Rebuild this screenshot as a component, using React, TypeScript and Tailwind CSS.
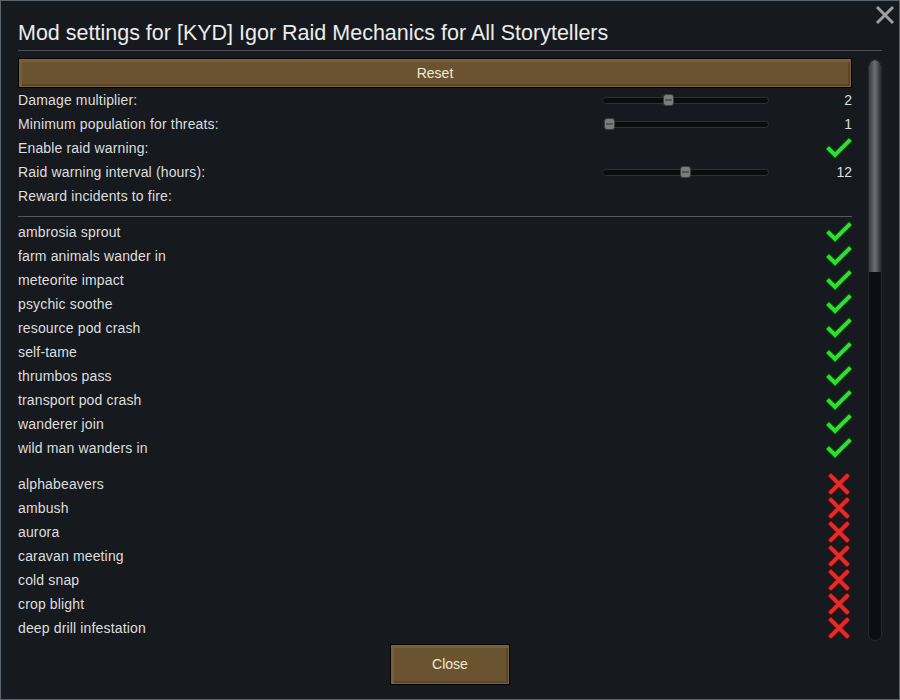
const good = [
  'ambrosia sprout',
  'farm animals wander in',
  'meteorite impact',
  'psychic soothe',
  'resource pod crash',
  'self-tame',
  'thrumbos pass',
  'transport pod crash',
  'wanderer join',
  'wild man wanders in',
];

const bad = ['alphabeavers', 'ambush', 'aurora', 'caravan meeting', 'cold snap', 'crop blight', 'deep drill infestation'];

const Check = () => (
  <svg width="26" height="22" viewBox="0 0 26 22">
    <polyline points="3,12 9,18 23,4" fill="none" stroke="#0f3a10" strokeWidth="6.5" strokeLinecap="square" strokeLinejoin="miter" />
    <polyline points="3,12 9,18 23,4" fill="none" stroke="#2ee02e" strokeWidth="4" strokeLinecap="square" strokeLinejoin="miter" />
  </svg>
);

const Cross = () => (
  <svg width="24" height="22" viewBox="0 0 24 22">
    <path d="M4 3 L20 19 M20 3 L4 19" fill="none" stroke="#4a0c0c" strokeWidth="6" strokeLinecap="square" />
    <path d="M4 3 L20 19 M20 3 L4 19" fill="none" stroke="#e52a2a" strokeWidth="4" strokeLinecap="square" />
  </svg>
);

const Slider = ({ thumb }: { thumb: string }) => (
  <div className="relative w-[167px] h-[12px] flex items-center">
    <div className="w-full h-[7px] rounded-full bg-[#0a0c0e] border border-[#2b3036]" />
    <div className={`absolute top-0 ${thumb} w-[11px] h-[12px] rounded-[3px] bg-[#7a7c7e] border border-[#3a3c3e] flex items-center justify-center`}>
      <div className="w-[7px] h-[2px] bg-[#55575a]" />
    </div>
  </div>
);

const Row = ({ label, children }: { label: string; children?: React.ReactNode }) => (
  <div className="h-6 flex items-center">
    <span className="flex-1 pt-[1px] tracking-[0.15px]">{label}</span>
    {children}
  </div>
);

const Button = ({ label, className }: { label: string; className: string }) => (
  <div
    className={`${className} border border-black bg-[#6a5330] shadow-[inset_0_0_0_1px_#7d6238,inset_3px_3px_0_#7a5f36,inset_-3px_-3px_0_#5a4527] flex items-center justify-center text-[#f3ead0] text-[14px]`}
  >
    {label}
  </div>
);

export default function App() {
  return (
    <div
      className="relative w-[900px] h-[700px] bg-[#161a1e] border border-[#5a626b] text-[#dedede] text-[14px] overflow-hidden flex flex-col"
      style={{ fontFamily: '"Liberation Sans", Arial, sans-serif' }}
    >
      <svg className="absolute top-[3px] right-[3px]" width="22" height="22" viewBox="0 0 22 22">
        <path d="M3 3 L19 19 M19 3 L3 19" stroke="#9ea1a4" strokeWidth="3" />
      </svg>

      <div className="mx-[17px] pt-[20px] pb-[5px] border-b border-[#4b5055]">
        <div className="text-[21.5px] leading-[24px] text-[#ececec]">Mod settings for [KYD] Igor Raid Mechanics for All Storytellers</div>
      </div>

      <div className="flex ml-[17px] mt-[7px] h-[583px]">
        <div className="w-[834px] overflow-hidden">
          <Button label="Reset" className="h-[30px] w-full" />
          <Row label="Damage multiplier:">
            <Slider thumb="left-[61px]" />
            <span className="w-[83px] text-right">2</span>
          </Row>
          <Row label="Minimum population for threats:">
            <Slider thumb="left-[2px]" />
            <span className="w-[83px] text-right">1</span>
          </Row>
          <Row label="Enable raid warning:">
            <Check />
          </Row>
          <Row label="Raid warning interval (hours):">
            <Slider thumb="left-[78px]" />
            <span className="w-[83px] text-right">12</span>
          </Row>
          <Row label="Reward incidents to fire:" />
          <div className="mt-[8px] mb-[3px] border-t border-[#55595e]" />
          {good.map((g) => (
            <Row key={g} label={g}>
              <Check />
            </Row>
          ))}
          <div className="h-3" />
          {bad.map((b) => (
            <Row key={b} label={b}>
              <span className="mr-[1px]">
                <Cross />
              </span>
            </Row>
          ))}
        </div>
        <div className="ml-[16px] mt-[1px] w-[14px] h-[582px] rounded-full bg-[#0c0f12] border border-[#25292e] overflow-hidden">
          <div className="h-[212px] rounded-t-full bg-gradient-to-r from-[#3a3c3e] via-[#6e7073] to-[#2b2d2f]" />
        </div>
      </div>

      <div className="flex justify-center mt-[3px]">
        <Button label="Close" className="w-[120px] h-[41px]" />
      </div>
    </div>
  );
}
